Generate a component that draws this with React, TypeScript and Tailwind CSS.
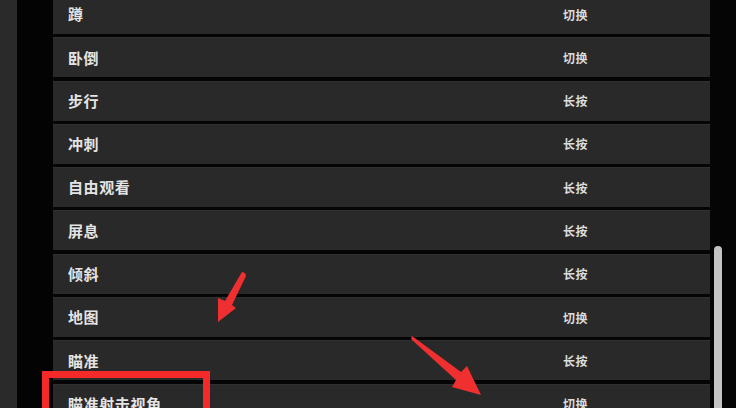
import React from 'react'

const rows = [
  { name: '蹲', mode: '切换' },
  { name: '卧倒', mode: '切换' },
  { name: '步行', mode: '长按' },
  { name: '冲刺', mode: '长按' },
  { name: '自由观看', mode: '长按' },
  { name: '屏息', mode: '长按' },
  { name: '倾斜', mode: '长按' },
  { name: '地图', mode: '切换' },
  { name: '瞄准', mode: '长按' },
  { name: '瞄准射击视角', mode: '切换' },
]

const font = { fontFamily: '"Noto Sans CJK SC", "Noto Sans", sans-serif' }

const App = () => {
  return (
    <div
      className="relative w-[736px] h-[408px] overflow-hidden bg-[#050505] flex"
      style={font}
    >
      {/* left edge of the screen */}
      <div className="w-[17px] h-full bg-[#2a2a2a]" />
      <div className="w-[36px] h-full bg-[#030303]" />

      {/* key binding list */}
      <div className="w-[657px] flex flex-col gap-[3.3px] -mt-[6px]">
        {rows.map((row) => (
          <div
            key={row.name}
            className="h-[40px] shrink-0 flex items-center bg-[#292929] border-t border-[#303030]"
          >
            <span className="w-[510px] pl-[15px] text-[15px] tracking-[0.6px] font-bold text-[#e4e4e4]">
              {row.name}
            </span>
            <span className="text-[12px] tracking-[0.5px] font-bold text-[#dcdcdc]">
              {row.mode}
            </span>
          </div>
        ))}
      </div>

      {/* scrollbar */}
      <div className="flex-1 flex pl-[4px]">
        <div className="w-[8px] mt-[246px] h-full rounded-t-[4px] bg-[#c4c4c4]" />
      </div>

      {/* red annotations */}
      <div className="absolute left-[42px] top-[371px] w-[168px] h-[60px] border-[7px] border-[#f42a2a]" />
      <svg
        className="absolute left-0 top-0 pointer-events-none"
        width="736"
        height="408"
        viewBox="0 0 736 408"
      >
        <path
          d="M245 273 L246 276 L232 305 L236 308 L218 322 L218 298 L225 301 L242 272 Z"
          fill="#f03030"
        />
        <path
          d="M412 336 L461 372 L467 366 L481 395 L452 387 L456 380 L411 339 Z"
          fill="#f03030"
        />
      </svg>
    </div>
  )
}

export default App
